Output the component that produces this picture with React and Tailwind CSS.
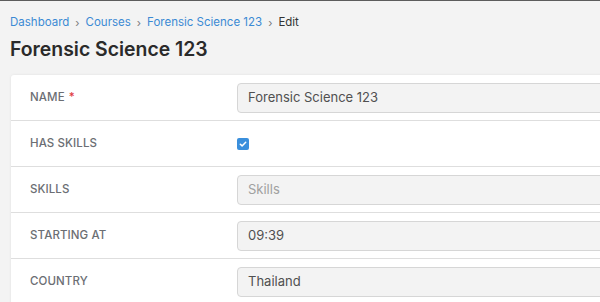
import React from "react";

function Sep() {
  return <span className="mx-[6px] text-[#7a7a7a] text-[11px]">›</span>;
}

function Row({ label, required, children, last }) {
  return (
    <div className={"flex items-center h-[46px] " + (last ? "" : "border-b border-[#dedede]")}>
      <div className="w-[226px] shrink-0 pl-[19px] text-[11.5px] font-medium uppercase text-[#6b6e73] tracking-[0.1px]">
        {label}
        {required && <span className="text-[#e0383e] ml-[4px]">*</span>}
      </div>
      <div className="flex-1 flex items-center">{children}</div>
    </div>
  );
}

function Input({ value, placeholder }) {
  return (
    <div className="w-[500px] h-[30px] rounded-[4px] border border-[#d6d6d6] bg-[#f3f3f3] flex items-center pl-[10px] text-[13px]">
      {value ? (
        <span className="text-[#505050]">{value}</span>
      ) : (
        <span className="text-[#a0a0a0]">{placeholder}</span>
      )}
    </div>
  );
}

export default function App() {
  return (
    <div
      className="w-[600px] h-[302px] overflow-hidden bg-[#f3f3f3] border-t border-[#5c5c5c]"
      style={{ fontFamily: "Inter, 'Noto Sans', sans-serif" }}
    >
      <div className="pl-[10px] pt-[14px] text-[11.5px] flex items-center h-[16px] box-content">
        <span className="text-[#3b8ad4]">Dashboard</span>
        <Sep />
        <span className="text-[#3b8ad4]">Courses</span>
        <Sep />
        <span className="text-[#3b8ad4]">Forensic Science 123</span>
        <Sep />
        <span className="text-[#333]">Edit</span>
      </div>
      <div className="pl-[10px] mt-[5px] text-[19.4px] font-semibold text-[#2a2a2a] leading-[26px]">
        Forensic Science 123
      </div>
      <div className="ml-[11px] mt-[13px] w-[700px] bg-white rounded-tl-[3px] shadow-[0_0_3px_rgba(0,0,0,0.08)]">
        <Row label="Name" required>
          <Input value="Forensic Science 123" />
        </Row>
        <Row label="Has Skills">
          <div className="w-[12px] h-[12px] rounded-[2px] bg-[#3a8fdc] flex items-center justify-center">
            <svg width="8" height="8" viewBox="0 0 8 8">
              <path d="M1.3 4.2 L3.1 5.9 L6.7 2.2" fill="none" stroke="white" strokeWidth="1.5" strokeLinecap="round" strokeLinejoin="round" />
            </svg>
          </div>
        </Row>
        <Row label="Skills">
          <Input placeholder="Skills" />
        </Row>
        <Row label="Starting At">
          <Input value="09:39" />
        </Row>
        <Row label="Country" last>
          <Input value="Thailand" />
        </Row>
      </div>
    </div>
  );
}
